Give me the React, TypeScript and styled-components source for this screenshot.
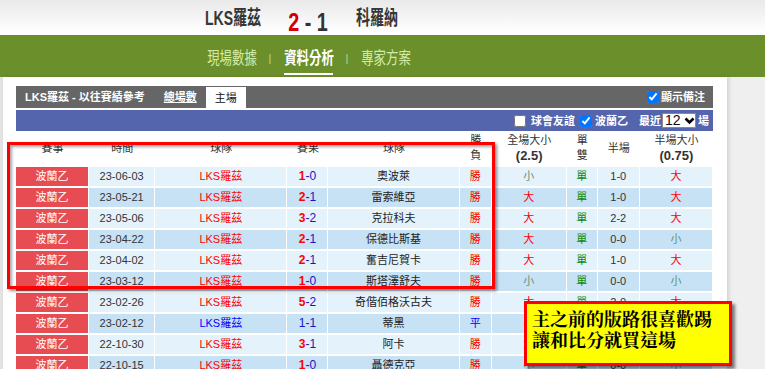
import styled, { createGlobalStyle } from "styled-components";

const GlobalStyle = createGlobalStyle`
  html, body {
    margin: 0;
    padding: 0;
  }
  body {
    width: 765px;
    height: 369px;
    overflow: hidden;
    background: #efefef;
    font-family: "Liberation Sans", "Noto Sans CJK TC", sans-serif;
  }
`;

const CJK = `"Liberation Sans", "Noto Sans CJK TC", sans-serif`;

const Header = styled.header`
  height: 35px;
  display: flex;
  align-items: center;
  padding-left: 183px;
  box-sizing: border-box;
  background: linear-gradient(#e9e9e9, #fdfdfd 85%);
`;

const Slot = styled.div<{ $w: number; $drop?: number }>`
  width: ${(p) => p.$w}px;
  display: flex;
  justify-content: center;
  margin-top: ${(p) => p.$drop ?? 0}px;
`;

const Squeeze = styled.span<{ $x: number }>`
  display: inline-block;
  white-space: nowrap;
  transform: scaleX(${(p) => p.$x});
  transform-origin: center;
`;

const TeamName = styled(Squeeze)`
  font: 700 20px/24px ${CJK};
  color: #363636;
`;

const Score = styled(Squeeze)`
  font: 700 26px/26px "Liberation Sans", sans-serif;
  color: #333;
`;

const HomeGoals = styled.span`
  color: #d10000;
`;

const Nav = styled.nav`
  height: 42px;
  display: flex;
  align-items: stretch;
  padding-left: 200px;
  box-sizing: border-box;
  background: #6b8f2b;
`;

const NavItem = styled.div<{ $w: number; $active?: boolean }>`
  position: relative;
  width: ${(p) => p.$w}px;
  display: flex;
  align-items: center;
  justify-content: center;

  &::after {
    content: "";
    display: ${(p) => (p.$active ? "block" : "none")};
    position: absolute;
    left: 50%;
    bottom: 2px;
    width: 49px;
    height: 2px;
    margin-left: -24.5px;
    background: #fff;
  }
`;

const NavLabel = styled(Squeeze)<{ $active?: boolean }>`
  font: ${(p) => (p.$active ? 700 : 400)} 17px/20px "Noto Sans CJK TC", sans-serif;
  color: ${(p) => (p.$active ? "#fff" : "#d3eba8")};
  margin-top: 1px;
`;

const NavSep = styled.span`
  width: 12px;
  display: flex;
  align-items: center;
  justify-content: center;
  font: 11px/12px "Liberation Sans", sans-serif;
  color: #bcd88e;
  margin-top: 3px;
`;

const Main = styled.main`
  position: relative;
  display: flex;
  height: 292px;
`;

const LeftEdge = styled.div`
  width: 3px;
  background: #e3e3e3;
`;

const Panel = styled.section`
  width: 724px;
  padding: 9px 14px 0 13px;
  box-sizing: border-box;
  background: #fff;
  box-shadow: 2px 0 4px rgba(0, 0, 0, 0.13);
`;

const TitleBar = styled.div`
  height: 22px;
  display: flex;
  align-items: center;
  padding: 0 8px 0 9px;
  background: #666;
  color: #fff;
  font: 700 11px/14px ${CJK};
`;

const TitleLink = styled.span`
  margin-left: 19px;
  text-decoration: underline;
`;

const Tab = styled.div`
  align-self: flex-end;
  width: 40px;
  height: 21px;
  margin-left: 9px;
  display: flex;
  align-items: center;
  justify-content: center;
  background: #fff;
  color: #111;
  font-weight: 400;
`;

const Spacer = styled.div`
  flex: 1;
`;

const CheckLabel = styled.label<{ $gap?: number; $ml?: number }>`
  display: flex;
  align-items: center;
  gap: ${(p) => p.$gap ?? 2}px;
  margin-left: ${(p) => p.$ml ?? 0}px;
  white-space: nowrap;

  input {
    width: 12px;
    height: 12px;
    margin: 0;
  }
`;

const FilterBar = styled.div`
  height: 21px;
  margin-top: 2px;
  display: flex;
  align-items: center;
  justify-content: flex-end;
  padding-right: 4px;
  background: #5465ad;
  color: #fff;
  font: 700 11px/14px ${CJK};
`;

const FilterText = styled.span<{ $ml?: number }>`
  margin-left: ${(p) => p.$ml ?? 0}px;
`;

const SelectBox = styled.div`
  width: 34px;
  height: 15px;
  margin: 0 2px 0 1px;
  box-sizing: border-box;
  display: flex;
  align-items: center;
  gap: 3px;
  padding-left: 2px;
  border: 1px solid #8a8a8a;
  background: #fff;
  color: #0a0a1a;
  font: 400 14px/13px "Liberation Sans", sans-serif;
`;

const Table = styled.table`
  width: 697px;
  table-layout: fixed;
  border-collapse: separate;
  border-spacing: 0;
  font: 400 11px/15px ${CJK};
`;

const Col = styled.col<{ $w: number }>`
  width: ${(p) => p.$w}px;
`;

const Th = styled.th`
  height: 34px;
  padding: 0;
  font-weight: 400;
  color: #333;
  line-height: 15px;
  text-align: center;
  vertical-align: middle;
`;

const SubHead = styled.b`
  font: 700 13px/15px "Liberation Sans", sans-serif;
`;

const Td = styled.td<{ $dark: boolean; $color?: string }>`
  padding: 0;
  line-height: 19px;
  border-top: 2px solid #fff;
  border-right: 1px solid #fff;
  text-align: center;
  white-space: nowrap;
  overflow: hidden;
  background: ${(p) => (p.$dark ? "#c7e1f5" : "#e4f2fb")};
  color: ${(p) => p.$color ?? "#333"};
`;

const LeagueTd = styled(Td)`
  background: #e64c51;
  color: #fff;
`;

const ScoreText = styled.span`
  font-size: 12px;
  color: #1414c8;
`;

const WinGoals = styled.b`
  color: #f00;
`;

const RedFrame = styled.div`
  position: absolute;
  left: 7px;
  top: 65px;
  width: 488px;
  height: 147px;
  box-sizing: border-box;
  border: 3px solid #f00;
  box-shadow: 2px 2px 3px rgba(0, 0, 0, 0.45), inset 2px 2px 3px rgba(0, 0, 0, 0.35);
  pointer-events: none;
`;

const NoteBox = styled.div`
  position: absolute;
  left: 524px;
  top: 224px;
  width: 208px;
  height: 65px;
  box-sizing: border-box;
  padding: 4px 0 0 5px;
  border: 3px solid #f00;
  background: #ffff00;
  box-shadow: 3px 3px 3px rgba(0, 0, 0, 0.5);
  color: #000;
  font: 700 18px/21px "Noto Serif CJK TC", "Noto Sans CJK TC", serif;
  white-space: nowrap;
`;

type Mark = "大" | "小";

interface Row {
  date: string;
  score: [number, number];
  away: string;
  res: "勝" | "平" | "負";
  ou: Mark;
  oe: "單" | "雙";
  half: string;
  hou: Mark;
}

const rows: Row[] = [
  { date: "23-06-03", score: [1, 0], away: "奧波萊", res: "勝", ou: "小", oe: "單", half: "1-0", hou: "大" },
  { date: "23-05-21", score: [2, 1], away: "雷索維亞", res: "勝", ou: "大", oe: "單", half: "1-0", hou: "大" },
  { date: "23-05-06", score: [3, 2], away: "克拉科夫", res: "勝", ou: "大", oe: "單", half: "2-2", hou: "大" },
  { date: "23-04-22", score: [2, 1], away: "保德比斯基", res: "勝", ou: "大", oe: "單", half: "0-0", hou: "小" },
  { date: "23-04-02", score: [2, 1], away: "奮吉尼賀卡", res: "勝", ou: "大", oe: "單", half: "1-0", hou: "大" },
  { date: "23-03-12", score: [1, 0], away: "斯塔澤舒夫", res: "勝", ou: "小", oe: "單", half: "0-0", hou: "小" },
  { date: "23-02-26", score: [5, 2], away: "奇偕佰格沃古夫", res: "勝", ou: "大", oe: "單", half: "2-0", hou: "大" },
  { date: "23-02-12", score: [1, 1], away: "蒂黑", res: "平", ou: "小", oe: "雙", half: "0-0", hou: "小" },
  { date: "22-10-30", score: [3, 1], away: "阿卡", res: "勝", ou: "大", oe: "雙", half: "1-1", hou: "大" },
  { date: "22-10-15", score: [1, 0], away: "聶德克亞", res: "勝", ou: "小", oe: "單", half: "0-0", hou: "小" },
];

const widths = [73, 66, 132, 41, 131, 32, 75, 31, 42, 73];

const resColor = { 勝: "#f00", 平: "#00f", 負: "#080" };
const markColor = { 大: "#f00", 小: "#5f9477" };

const Chevron = () => (
  <svg width="11" height="8" viewBox="0 0 11 8">
    <polyline points="1.5,1.5 5.5,5.5 9.5,1.5" fill="none" stroke="#000" strokeWidth="2.6" />
  </svg>
);

export default function App() {
  return (
    <>
      <GlobalStyle />
      <Header>
        <Slot $w={100}>
          <TeamName $x={0.7}>LKS羅茲</TeamName>
        </Slot>
        <Slot $w={50} $drop={8}>
          <Score $x={0.76}>
            <HomeGoals>2</HomeGoals> - 1
          </Score>
        </Slot>
        <Slot $w={88}>
          <TeamName $x={0.7}>科羅納</TeamName>
        </Slot>
      </Header>

      <Nav>
        <NavItem $w={64}>
          <NavLabel $x={0.73}>現場數據</NavLabel>
        </NavItem>
        <NavSep>|</NavSep>
        <NavItem $w={65} $active>
          <NavLabel $x={0.73} $active>
            資料分析
          </NavLabel>
        </NavItem>
        <NavSep>|</NavSep>
        <NavItem $w={65}>
          <NavLabel $x={0.73}>專家方案</NavLabel>
        </NavItem>
      </Nav>

      <Main>
        <LeftEdge />
        <Panel>
          <TitleBar>
            <span>LKS羅茲 - 以往賽績參考</span>
            <TitleLink>總場數</TitleLink>
            <Tab>主場</Tab>
            <Spacer />
            <CheckLabel>
              <input type="checkbox" defaultChecked />
              顯示備注
            </CheckLabel>
          </TitleBar>

          <FilterBar>
            <CheckLabel $gap={5}>
              <input type="checkbox" />
              球會友誼
            </CheckLabel>
            <CheckLabel $gap={3} $ml={5}>
              <input type="checkbox" defaultChecked />
              波蘭乙
            </CheckLabel>
            <FilterText $ml={11}>最近</FilterText>
            <SelectBox>
              12
              <Chevron />
            </SelectBox>
            <FilterText>場</FilterText>
          </FilterBar>

          <Table>
            <colgroup>
              {widths.map((w, i) => (
                <Col key={i} $w={w} />
              ))}
            </colgroup>
            <thead>
              <tr>
                <Th>賽事</Th>
                <Th>時間</Th>
                <Th>球隊</Th>
                <Th>賽果</Th>
                <Th>球隊</Th>
                <Th>
                  勝<br />負
                </Th>
                <Th>
                  全場大小
                  <br />
                  <SubHead>(2.5)</SubHead>
                </Th>
                <Th>
                  單<br />雙
                </Th>
                <Th>半場</Th>
                <Th>
                  半場大小
                  <br />
                  <SubHead>(0.75)</SubHead>
                </Th>
              </tr>
            </thead>
            <tbody>
              {rows.map((r, i) => {
                const dark = i % 2 === 1;
                const won = r.score[0] > r.score[1];
                return (
                  <tr key={r.date}>
                    <LeagueTd $dark={dark}>波蘭乙</LeagueTd>
                    <Td $dark={dark}>{r.date}</Td>
                    <Td $dark={dark} $color={won ? "#f00" : "#00f"}>
                      LKS羅茲
                    </Td>
                    <Td $dark={dark}>
                      <ScoreText>
                        {won ? <WinGoals>{r.score[0]}</WinGoals> : r.score[0]}-{r.score[1]}
                      </ScoreText>
                    </Td>
                    <Td $dark={dark} $color="#222">
                      {r.away}
                    </Td>
                    <Td $dark={dark} $color={resColor[r.res]}>
                      {r.res}
                    </Td>
                    <Td $dark={dark} $color={markColor[r.ou]}>
                      {r.ou}
                    </Td>
                    <Td $dark={dark} $color="#0a8a0a">
                      {r.oe}
                    </Td>
                    <Td $dark={dark}>{r.half}</Td>
                    <Td $dark={dark} $color={markColor[r.hou]}>
                      {r.hou}
                    </Td>
                  </tr>
                );
              })}
            </tbody>
          </Table>
        </Panel>

        <RedFrame />
        <NoteBox>
          主之前的版路很喜歡踢
          <br />
          讓和比分就買這場
        </NoteBox>
      </Main>
    </>
  );
}
